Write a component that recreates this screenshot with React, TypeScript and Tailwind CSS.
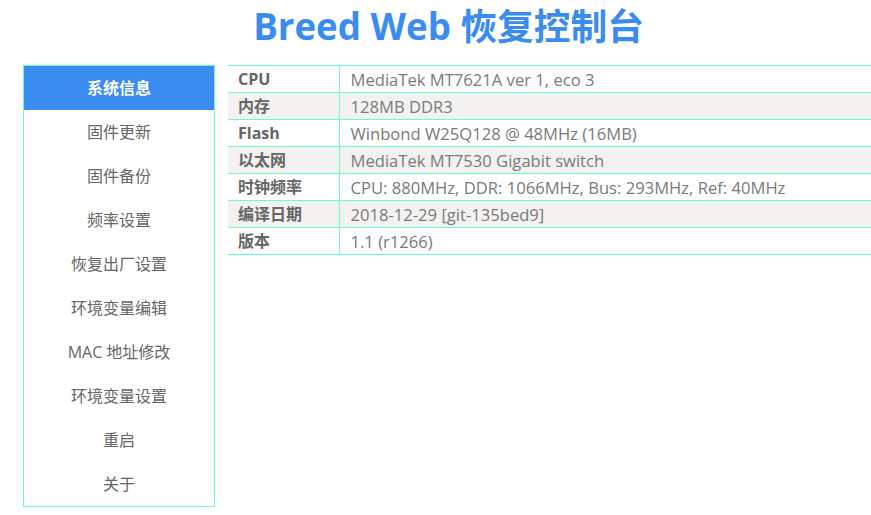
const menu = [
  "系统信息",
  "固件更新",
  "固件备份",
  "频率设置",
  "恢复出厂设置",
  "环境变量编辑",
  "MAC 地址修改",
  "环境变量设置",
  "重启",
  "关于",
];

const info: [string, string][] = [
  ["CPU", "MediaTek MT7621A ver 1, eco 3"],
  ["内存", "128MB DDR3"],
  ["Flash", "Winbond W25Q128 @ 48MHz (16MB)"],
  ["以太网", "MediaTek MT7530 Gigabit switch"],
  ["时钟频率", "CPU: 880MHz, DDR: 1066MHz, Bus: 293MHz, Ref: 40MHz"],
  ["编译日期", "2018-12-29 [git-135bed9]"],
  ["版本", "1.1 (r1266)"],
];

export default function App() {
  return (
    <div
      className="min-h-screen bg-white overflow-hidden"
      style={{ fontFamily: '"Open Sans", "Noto Sans CJK SC", sans-serif' }}
    >
      <h1 className="pl-[26px] pt-[2px] h-[65px] text-center text-[36.7px] leading-[48px] font-bold text-[#3a8cf0]">
        Breed Web 恢复控制台
      </h1>

      <div className="flex items-start">
        <ul className="ml-[23px] w-[192px] shrink-0 border border-[#66ffcc]">
          {menu.map((m, i) => (
            <li
              key={m}
              className={
                i === 0
                  ? "h-[44px] flex items-center justify-center bg-[#3a8cf0] text-white font-bold text-[16px]"
                  : "h-[44px] flex items-center justify-center text-[#666] text-[16px]"
              }
            >
              {m}
            </li>
          ))}
        </ul>

        <div className="ml-[13px] flex-1 min-w-[700px]">
          <table className="w-full border-collapse text-[16px]">
            <tbody>
              {info.map(([k, v], i) => (
                <tr
                  key={k}
                  className={
                    i % 2 === 1
                      ? "h-[27px] bg-[#f3f2f1] border-y border-[#66ffcc]"
                      : "h-[27px] bg-white border-y border-[#66ffcc]"
                  }
                >
                  <td className="w-[111px] pl-[10px] py-0 leading-[25px] font-bold text-[#666] border-r border-[#66ffcc]">
                    {k}
                  </td>
                  <td className="pl-[11px] py-0 leading-[25px] text-[16.6px] text-[#7a7a7a]">
                    {v}
                  </td>
                </tr>
              ))}
            </tbody>
          </table>
        </div>
      </div>
    </div>
  );
}
